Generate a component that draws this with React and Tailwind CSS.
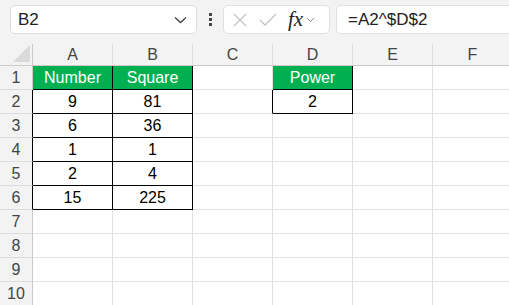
import React from "react";

const cols = ["A", "B", "C", "D", "E", "F"];

const data = {
  A1: "Number", B1: "Square", D1: "Power",
  A2: "9", B2: "81", D2: "2",
  A3: "6", B3: "36",
  A4: "1", B4: "1",
  A5: "2", B5: "4",
  A6: "15", B6: "225",
};

const isHead = (id) => id === "A1" || id === "B1" || id === "D1";
const inTable = (c, r) => ((c === "A" || c === "B") && r <= 6) || (c === "D" && r <= 2);

const cellClass = (c, r) => {
  const id = c + r;
  let right = "border-r-[#e1e1e1]";
  let bottom = "border-b-[#e1e1e1]";
  if (inTable(c, r)) {
    bottom = "border-b-black";
    right = "border-r-black";
  }
  // left edge of a table lives on the neighbour's right border
  if (c === "C" && r === 2) right = "border-r-black";
  let bg = isHead(id) ? "bg-[#00b050] text-white" : "bg-white text-black";
  return `h-6 border-r border-b ${right} ${bottom} ${bg} flex items-center justify-center text-[16px]`;
};

export default function App() {
  const rows = [1, 2, 3, 4, 5, 6, 7, 8, 9, 10];
  return (
    <div className="w-[509px] h-[305px] overflow-hidden bg-[#f3f3f3] font-['Liberation_Sans',Arial,sans-serif]">
      {/* Formula bar */}
      <div className="h-[44px] flex items-start pt-[5px] pl-[10px] gap-0">
        <div className="w-[187px] h-[29px] bg-white border border-[#dcdcdc] rounded-[5px] flex items-center justify-between pl-[7px] pr-[9px] text-[17px] text-[#222]">
          <span>B2</span>
          <svg width="13" height="8" viewBox="0 0 13 8">
            <path d="M1 1.5 L6.5 6.5 L12 1.5" fill="none" stroke="#444" strokeWidth="1.3" />
          </svg>
        </div>
        <div className="w-[26px] h-[29px] flex flex-col items-center justify-center gap-[2px]">
          <div className="w-[3px] h-[3px] bg-[#444]" />
          <div className="w-[3px] h-[3px] bg-[#444]" />
          <div className="w-[3px] h-[3px] bg-[#444]" />
        </div>
        <div className="w-[107px] h-[29px] bg-white border border-[#e0e0e0] rounded-[5px] flex items-center pl-[8px] gap-[11px]">
          <svg width="16" height="16" viewBox="0 0 16 16">
            <path d="M2 2 L14 14 M14 2 L2 14" stroke="#c4c4c4" strokeWidth="1.3" />
          </svg>
          <svg width="18" height="14" viewBox="0 0 18 14">
            <path d="M1 7 L6 12 L17 1" fill="none" stroke="#c4c4c4" strokeWidth="1.3" />
          </svg>
          <div className="flex items-center gap-[3px]">
            <span className="font-['Liberation_Serif',serif] italic text-[21px] text-[#222] leading-none">fx</span>
            <svg width="9" height="6" viewBox="0 0 9 6">
              <path d="M1 1 L4.5 4.5 L8 1" fill="none" stroke="#888" strokeWidth="1" />
            </svg>
          </div>
        </div>
        <div className="ml-[6px] flex-1 h-[29px] bg-white border border-[#e0e0e0] rounded-l-[5px] border-r-0 flex items-center pl-[11px] text-[17px] text-[#222]">
          =A2^$D$2
        </div>
      </div>

      {/* Sheet grid */}
      <div className="grid grid-cols-[33px_repeat(6,80px)] grid-rows-[22px_repeat(10,24px)]">
        <div className="border-r border-b border-[#c9c9c9] bg-[#f3f3f3] relative">
          <svg className="absolute right-[2px] bottom-[3px]" width="17" height="17" viewBox="0 0 17 17">
            <path d="M17 0 L17 17 L0 17 Z" fill="#dadada" />
          </svg>
        </div>
        {cols.map((c) => (
          <div key={c} className="border-r border-b border-r-[#dcdcdc] border-b-[#c9c9c9] bg-[#f3f3f3] flex items-center justify-center text-[16px] text-[#444]">
            {c}
          </div>
        ))}
        {rows.map((r) => (
          <React.Fragment key={r}>
            <div className={`border-r border-b border-b-[#dcdcdc] ${r >= 2 && r <= 6 ? "border-r-black" : "border-r-[#c9c9c9]"} bg-[#f3f3f3] flex items-center justify-center text-[16px] text-[#444]`}>
              {r}
            </div>
            {cols.map((c) => (
              <div key={c} className={cellClass(c, r)}>
                {data[c + r] || ""}
              </div>
            ))}
          </React.Fragment>
        ))}
      </div>
    </div>
  );
}
